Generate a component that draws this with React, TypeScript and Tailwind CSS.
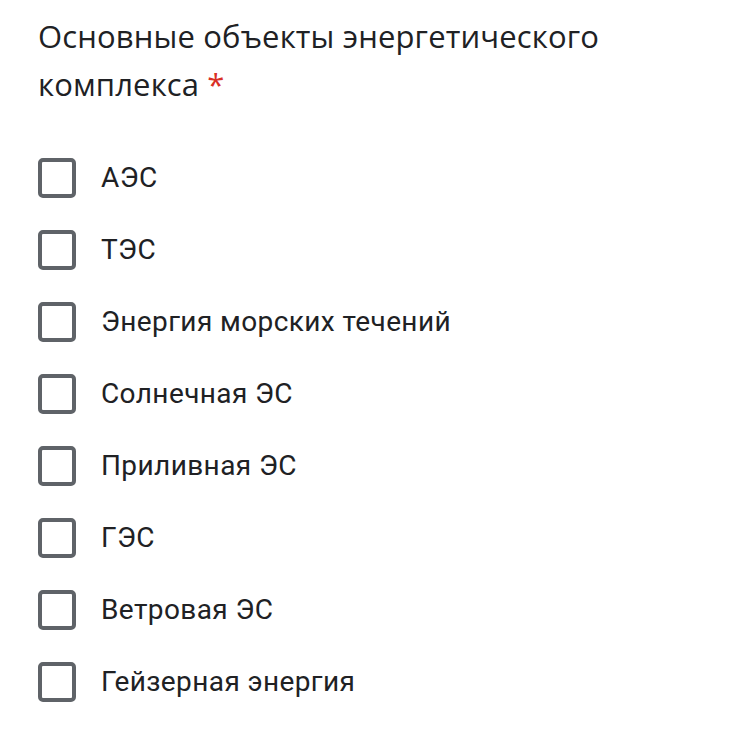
const options = [
  'АЭС',
  'ТЭС',
  'Энергия морских течений',
  'Солнечная ЭС',
  'Приливная ЭС',
  'ГЭС',
  'Ветровая ЭС',
  'Гейзерная энергия',
]

export default function App() {
  return (
    <div className="min-h-screen w-[729px] h-[730px] bg-white pl-[38px] pt-[12px]" style={{ fontFamily: 'Roboto, sans-serif' }}>
      {/* Question title */}
      <h2 className="text-[31px] leading-[48px] tracking-[0.15px] text-[#202124] font-normal" style={{ fontFamily: '"Open Sans", sans-serif' }}>
        Основные объекты энергетического
        <br />
        комплекса<span className="text-[#d93025] ml-[8px]">*</span>
      </h2>

      {/* Options */}
      <div className="mt-[34px] flex flex-col">
        {options.map((opt) => (
          <label key={opt} className="flex items-center h-[72px] gap-[25px] cursor-pointer">
            <span className="w-[38px] h-[40px] border-[4px] border-[#5f6368] rounded-[5px] shrink-0" />
            <span className="text-[28px] text-[#202124] tracking-[0.4px]">{opt}</span>
          </label>
        ))}
      </div>
    </div>
  )
}
